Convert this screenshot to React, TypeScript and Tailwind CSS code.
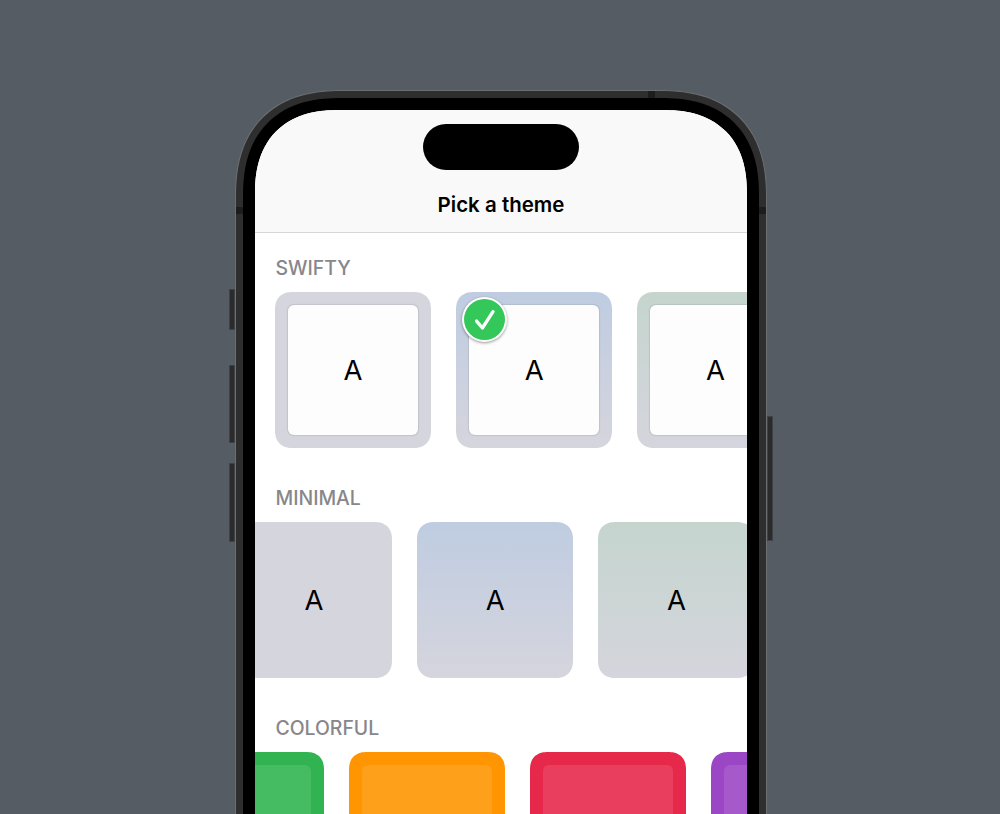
import type { ReactNode } from "react";

type CardProps = { tone: string; inner?: string; label?: string; selected?: boolean };

function Badge() {
  return (
    <span className="absolute left-[6px] top-[5px] flex size-[45px] items-center justify-center rounded-full bg-white shadow-[0_1px_3px_rgba(0,0,0,0.4)]">
      <span className="flex size-[41px] items-center justify-center rounded-full bg-[#34c759]">
        <svg width="22" height="22" viewBox="0 0 22 22" fill="none">
          <path d="M2.6 12.1 L8.4 19 L19 2.7" stroke="white" strokeWidth="3.3" strokeLinecap="round" strokeLinejoin="round" />
        </svg>
      </span>
    </span>
  );
}

function Card({ tone, inner, label, selected }: CardProps) {
  return (
    <div className={`relative flex size-[156px] shrink-0 rounded-[18px] [corner-shape:superellipse(1.25)] p-[13px] ${tone}`}>
      <div className={`flex flex-1 items-center justify-center rounded-[6px] pt-px text-[27.5px] leading-none text-black ${inner ?? ""}`}>
        {label}
      </div>
      {selected && <Badge />}
    </div>
  );
}

function Section({ title, offset, children }: { title: string; offset: string; children: ReactNode }) {
  return (
    <section className="h-[230.2px] shrink-0">
      <h2 className="flex h-[59px] items-center pl-[20.5px] pt-[10px] text-[19.4px] font-[540] leading-6 text-[#87878b]">
        <span>{title}</span>
      </h2>
      <div className={`flex gap-[25.2px] ${offset}`}>{children}</div>
    </section>
  );
}

const white = "bg-[#fdfdfd] shadow-[0_0_1px_0.5px_rgba(110,110,130,0.18)]";
const gray = "bg-[#d5d5dd]";
const blue = "bg-linear-to-b from-[#bfcce1] to-[#d5d5dd]";
const green = "bg-linear-to-b from-[#c5d5ce] to-[#d5d5dd]";
const tint = "bg-white/10";

function SideButton({ size }: { size: string }) {
  return <div className={`w-[6px] shrink-0 border border-[#3f4347] bg-[#2b2b2b] ${size}`} />;
}

export default function App() {
  return (
    <main className="flex h-[814px] w-[1000px] overflow-hidden bg-[#565c64] pl-[229px] pt-[90px] font-['Inter',sans-serif]">
      <div className="flex shrink-0 flex-col pt-[199px]">
        <SideButton size="h-[41px]" />
        <div className="h-[35px]" />
        <SideButton size="h-[78px]" />
        <div className="h-[20px]" />
        <SideButton size="h-[79px]" />
      </div>
      <div className="relative h-[1080px] w-[532px] shrink-0 rounded-[107px] border border-[#6c6f72] bg-[#2e2e2e] p-[7px] [corner-shape:superellipse(1.25)]">
        <div className="absolute left-0 top-[116px] h-[7px] w-[7px] bg-[#1d1d1d]" />
        <div className="absolute right-0 top-[116px] h-[7px] w-[7px] bg-[#1d1d1d]" />
        <div className="absolute left-[412px] top-0 h-[7px] w-[7px] bg-[#1d1d1d]" />
        <div className="relative h-full rounded-[98px] bg-black p-[12px] [corner-shape:superellipse(1.25)]">
          <div className="flex h-full flex-col overflow-hidden rounded-[84px] bg-white [corner-shape:superellipse(1.25)]">
            <header className="flex h-[123px] shrink-0 flex-col items-center border-b border-[#d6d6d6] bg-[#f9f9f9] pt-[14px]">
              <div className="h-[46px] w-[156px] rounded-full bg-black" />
              <h1 className="pt-[23px] text-[20.5px] font-semibold leading-6 text-black">Pick a theme</h1>
            </header>
            <Section title="SWIFTY" offset="ml-[20px]">
              <Card tone={gray} inner={white} label="A" />
              <Card tone={blue} inner={white} label="A" selected />
              <Card tone={green} inner={white} label="A" />
            </Section>
            <Section title="MINIMAL" offset="-ml-[19px]">
              <Card tone={gray} label="A" />
              <Card tone={blue} label="A" />
              <Card tone={green} label="A" />
            </Section>
            <Section title="COLORFUL" offset="-ml-[87.5px]">
              <Card tone="bg-[#30b350]" inner={tint} />
              <Card tone="bg-[#ff9500]" inner={tint} />
              <Card tone="bg-[#e6294b]" inner={tint} />
              <Card tone="bg-[#9b46c4]" inner={tint} />
            </Section>
          </div>
        </div>
      </div>
      <div className="shrink-0 pt-[326px]">
        <SideButton size="h-[125px]" />
      </div>
    </main>
  );
}
